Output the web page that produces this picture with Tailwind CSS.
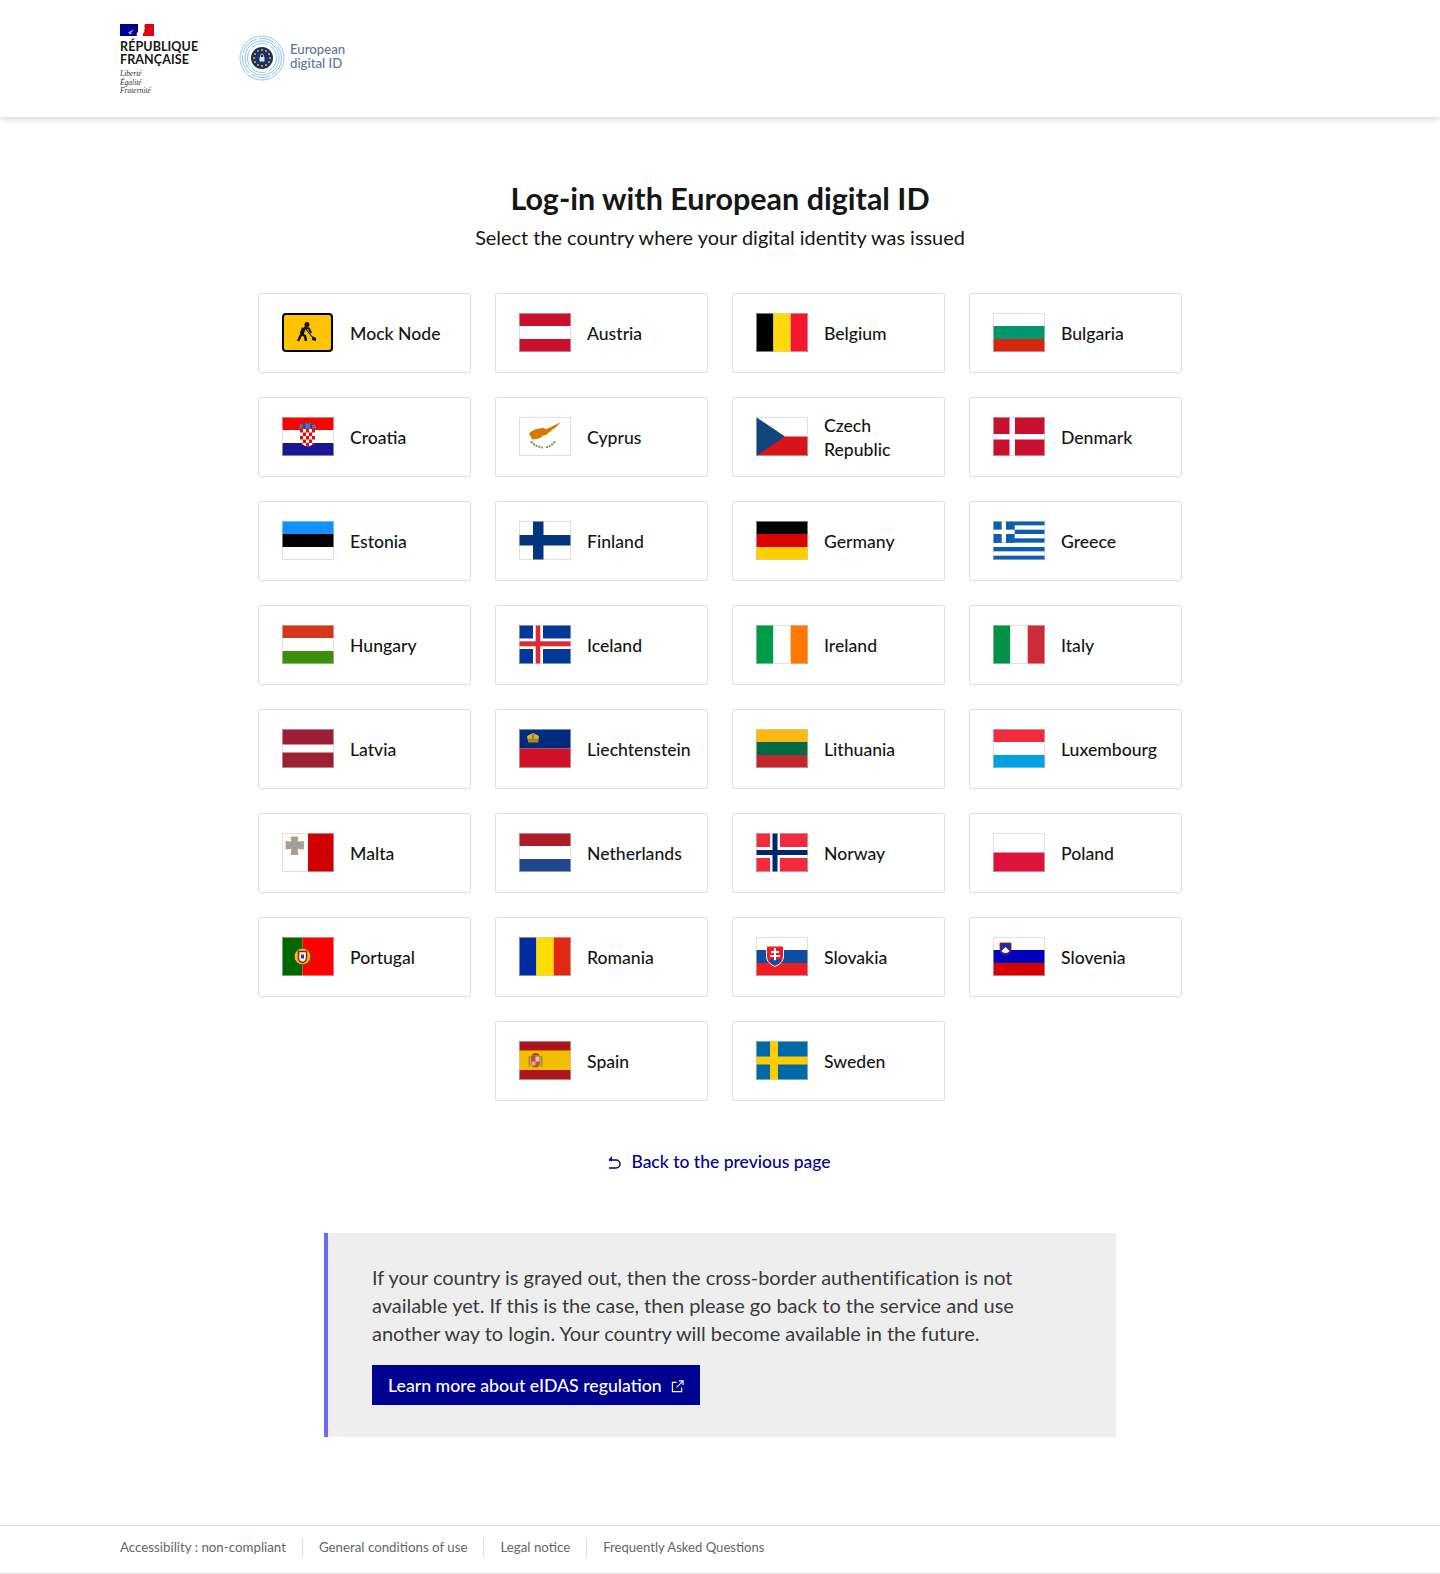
<!DOCTYPE html>
<html lang="en">
<head>
    <meta charset="UTF-8">
    <title>Log-in with European digital ID</title>
    <script src="https://cdn.jsdelivr.net/npm/@tailwindcss/browser@4"></script>
</head>
<body class="bg-white text-[#161616] font-['Lato','Noto_Sans',sans-serif]">

    <!-- header -->
    <header class="h-[117px] bg-white shadow-[0_2px_6px_rgba(0,0,18,0.16)] flex items-start pl-[120px]">
        <div class="pt-[24px] w-[119px]">
            <svg width="34" height="12" viewBox="0 0 34 12" class="block">
                <rect width="18" height="12" fill="#000091"/><rect x="18" width="5" height="12" fill="#fff"/><rect x="23" width="11" height="12" fill="#e1000f"/>
                <path d="M17 12 C16 10 17.500 8 18.500 6.500 C18 4 20 1 23 0 L25 0 C24 2 24.500 3.500 25 5 L24 6 L24.500 8 L23 9.500 L23 12 Z" fill="#fff"/>
                <path d="M8 8.500 L14 5 L11 9 L13 9 L10 10.500 Z" fill="#9a9ad0"/>
            </svg>
            <p class="mt-[4px] font-bold text-[12.5px] leading-[13px] tracking-[0.1px] text-[#161616]">RÉPUBLIQUE<br>FRANÇAISE</p>
            <p class="mt-[4px] font-['Liberation_Serif',serif] italic text-[7.5px] leading-[8.5px] text-[#333]">Liberté<br>Égalité<br>Fraternité</p>
        </div>
        <div class="flex items-center mt-[35px] gap-[5px]">
            <svg width="46" height="46" viewBox="0 0 46 46" fill="none">
                <circle cx="23" cy="23" r="22" stroke="#7db9ec" stroke-width="0.8"/>
                <circle cx="23" cy="23" r="19.5" stroke="#6eb1ea" stroke-width="0.8" stroke-dasharray="20 2"/>
                <circle cx="23" cy="23" r="17" stroke="#6eb1ea" stroke-width="0.8"/>
                <circle cx="23" cy="23" r="14.5" stroke="#6eb1ea" stroke-width="0.8" stroke-dasharray="16 3"/>
                <circle cx="23" cy="23" r="11" fill="#1f2f66"/>
                <g fill="#e8b93a">
                    <circle cx="23" cy="15" r="1"/><circle cx="27" cy="16" r="1"/><circle cx="30" cy="19" r="1"/><circle cx="31" cy="23" r="1"/><circle cx="30" cy="27" r="1"/><circle cx="27" cy="30" r="1"/><circle cx="23" cy="31" r="1"/><circle cx="19" cy="30" r="1"/><circle cx="16" cy="27" r="1"/><circle cx="15" cy="23" r="1"/><circle cx="16" cy="19" r="1"/><circle cx="19" cy="16" r="1"/>
                </g>
                <rect x="20.5" y="22" width="5" height="4.5" rx="0.5" fill="#dfe6f2"/>
                <path d="M21.5 22 V20.5 A1.5 1.5 0 0 1 24.5 20.5 V22" stroke="#dfe6f2" stroke-width="0.8"/>
            </svg>
            <p class="mb-[4px] text-[13.2px] leading-[14px] font-medium text-[#5c7698]">European<br>digital ID</p>
        </div>
    </header>

    <main class="flex flex-col items-center">
        <h1 class="mt-[62px] text-[30.5px] leading-[38px] font-bold">Log-in with European digital ID</h1>
        <p class="mt-[5px] text-[19.9px] leading-[30px]">Select the country where your digital identity was issued</p>

        <div class="mt-[41px] grid grid-cols-[repeat(4,213px)] auto-rows-[80px] gap-[24px] text-[17.6px] leading-[24px] font-medium">

            <a class="flex items-center gap-[16px] pl-[23px] pr-[8px] pb-px border border-[#ddd] rounded-[3px]">
                <svg width="52" height="39" viewBox="0 0 52 39" class="shrink-0"><rect x="1" y="1" width="49" height="37" rx="3" fill="#ffc400" stroke="#000" stroke-width="2"/><circle cx="25" cy="11.500" r="2.500" fill="#111"/><g fill="none" stroke="#111" stroke-linejoin="round"><path d="M22 15 L19.500 21" stroke-width="4"/><path d="M19.500 21 L16 28" stroke-width="2.500"/><path d="M19.500 21 L23 23 L24 28" stroke-width="2.500"/><path d="M22 14.500 L27 15.500 L29 20" stroke-width="2"/><path d="M23 15 L31 25" stroke-width="1.200"/></g><path d="M30 23 L34 25 L34 28 L30 27 Z" fill="#111"/></svg>
                <span class="pt-[3px]">Mock Node</span>
            </a>
            <a class="flex items-center gap-[16px] pl-[23px] pr-[8px] pb-px border border-[#ddd] rounded-[3px]">
                <svg width="52" height="39" viewBox="0 0 52 39" class="shrink-0"><rect width="52" height="39" fill="#fff"/><rect width="52" height="13" fill="#c8102e"/><rect y="26" width="52" height="13" fill="#c8102e"/><rect x=".5" y=".5" width="51" height="38" fill="none" stroke="#ccc" stroke-opacity=".6"/></svg>
                <span class="pt-[3px]">Austria</span>
            </a>
            <a class="flex items-center gap-[16px] pl-[23px] pr-[8px] pb-px border border-[#ddd] rounded-[3px]">
                <svg width="52" height="39" viewBox="0 0 52 39" class="shrink-0"><rect width="17.400" height="39" fill="#000"/><rect x="17.400" width="17.300" height="39" fill="#ffd90c"/><rect x="34.700" width="17.300" height="39" fill="#f31830"/><rect x=".5" y=".5" width="51" height="38" fill="none" stroke="#ccc" stroke-opacity=".6"/></svg>
                <span class="pt-[3px]">Belgium</span>
            </a>
            <a class="flex items-center gap-[16px] pl-[23px] pr-[8px] pb-px border border-[#ddd] rounded-[3px]">
                <svg width="52" height="39" viewBox="0 0 52 39" class="shrink-0"><rect width="52" height="13" fill="#fff"/><rect y="13" width="52" height="13" fill="#00966e"/><rect y="26" width="52" height="13" fill="#d62612"/><rect x=".5" y=".5" width="51" height="38" fill="none" stroke="#ccc" stroke-opacity=".6"/></svg>
                <span class="pt-[3px]">Bulgaria</span>
            </a>

            <a class="flex items-center gap-[16px] pl-[23px] pr-[8px] pb-px border border-[#ddd] rounded-[3px]">
                <svg width="52" height="39" viewBox="0 0 52 39" class="shrink-0"><defs><clipPath id="hr-shield"><path d="M18 12 H33 V23 C33 27 29.500 28.500 25.500 29.500 C21.500 28.500 18 27 18 23 Z"/></clipPath></defs><rect width="52" height="13" fill="#f00"/><rect y="13" width="52" height="13" fill="#fff"/><rect y="26" width="52" height="13" fill="#171796"/><path d="M17 11.500 L18 7 L21 8 L23 5.500 L25.500 7 L28 5.500 L30 8 L33 7 L34.500 11.500 Z" fill="#3f7fb8"/><path d="M20.500 11.500 L21 8 L23 5.500 L23.500 11.500 Z M28 11.500 L28 5.500 L30 8 L30.500 11.500 Z" fill="#2f3f88"/><g clip-path="url(#hr-shield)"><rect x="18" y="12" width="15" height="18" fill="#fff"/><g fill="#f00"><rect x="18" y="12" width="3" height="3.500"/><rect x="24" y="12" width="3" height="3.500"/><rect x="30" y="12" width="3" height="3.500"/><rect x="21" y="15.500" width="3" height="3.500"/><rect x="27" y="15.500" width="3" height="3.500"/><rect x="18" y="19" width="3" height="3.500"/><rect x="24" y="19" width="3" height="3.500"/><rect x="30" y="19" width="3" height="3.500"/><rect x="21" y="22.500" width="3" height="3.500"/><rect x="27" y="22.500" width="3" height="3.500"/><rect x="18" y="26" width="3" height="3.500"/><rect x="24" y="26" width="3" height="3.500"/><rect x="30" y="26" width="3" height="3.500"/></g></g><rect x=".5" y=".5" width="51" height="38" fill="none" stroke="#ccc" stroke-opacity=".6"/></svg>
                <span class="pt-[3px]">Croatia</span>
            </a>
            <a class="flex items-center gap-[16px] pl-[23px] pr-[8px] pb-px border border-[#ddd] rounded-[3px]">
                <svg width="52" height="39" viewBox="0 0 52 39" class="shrink-0"><rect width="52" height="39" fill="#fff"/><path d="M10 17 L12 14.500 L16 12.500 L20 11.500 L24 11 L27 12 L31 10.500 L36 8 L42 5 L37 10 L33 13 L30 15.500 L27 18 L24 18.500 L22 20.500 L18 22 L13 22.500 L12 20 Z" fill="#d57800"/><g fill="none" stroke="#7d8a68" stroke-width="2" stroke-dasharray="2 1"><path d="M12 24.500 C15 28 19 30 24 30.500"/><path d="M36 24.500 C33 28 30 30 26 30.500"/></g><rect x=".5" y=".5" width="51" height="38" fill="none" stroke="#ccc" stroke-opacity=".6"/></svg>
                <span class="pt-[3px]">Cyprus</span>
            </a>
            <a class="flex items-center gap-[16px] pl-[23px] pr-[8px] pb-px border border-[#ddd] rounded-[3px]">
                <svg width="52" height="39" viewBox="0 0 52 39" class="shrink-0"><rect width="52" height="19.500" fill="#fff"/><rect y="19.500" width="52" height="19.500" fill="#d7141a"/><path d="M0 0 L29 19.500 L0 39 Z" fill="#11457e"/><rect x=".5" y=".5" width="51" height="38" fill="none" stroke="#ccc" stroke-opacity=".6"/></svg>
                <span class="pt-[3px]">Czech<br>Republic</span>
            </a>
            <a class="flex items-center gap-[16px] pl-[23px] pr-[8px] pb-px border border-[#ddd] rounded-[3px]">
                <svg width="52" height="39" viewBox="0 0 52 39" class="shrink-0"><rect width="52" height="39" fill="#c8102e"/><rect x="16.500" width="5.500" height="39" fill="#fff"/><rect y="17" width="52" height="5.500" fill="#fff"/><rect x=".5" y=".5" width="51" height="38" fill="none" stroke="#ccc" stroke-opacity=".6"/></svg>
                <span class="pt-[3px]">Denmark</span>
            </a>

            <a class="flex items-center gap-[16px] pl-[23px] pr-[8px] pb-px border border-[#ddd] rounded-[3px]">
                <svg width="52" height="39" viewBox="0 0 52 39" class="shrink-0"><rect width="52" height="13" fill="#1291ff"/><rect y="13" width="52" height="13" fill="#000"/><rect y="26" width="52" height="13" fill="#fff"/><rect x=".5" y=".5" width="51" height="38" fill="none" stroke="#ccc" stroke-opacity=".6"/></svg>
                <span class="pt-[3px]">Estonia</span>
            </a>
            <a class="flex items-center gap-[16px] pl-[23px] pr-[8px] pb-px border border-[#ddd] rounded-[3px]">
                <svg width="52" height="39" viewBox="0 0 52 39" class="shrink-0"><rect width="52" height="39" fill="#fff"/><rect x="14" width="10.500" height="39" fill="#003580"/><rect y="14" width="52" height="10.500" fill="#003580"/><rect x=".5" y=".5" width="51" height="38" fill="none" stroke="#ccc" stroke-opacity=".6"/></svg>
                <span class="pt-[3px]">Finland</span>
            </a>
            <a class="flex items-center gap-[16px] pl-[23px] pr-[8px] pb-px border border-[#ddd] rounded-[3px]">
                <svg width="52" height="39" viewBox="0 0 52 39" class="shrink-0"><rect width="52" height="13" fill="#000"/><rect y="13" width="52" height="13" fill="#dd0000"/><rect y="26" width="52" height="13" fill="#ffce00"/><rect x=".5" y=".5" width="51" height="38" fill="none" stroke="#ccc" stroke-opacity=".6"/></svg>
                <span class="pt-[3px]">Germany</span>
            </a>
            <a class="flex items-center gap-[16px] pl-[23px] pr-[8px] pb-px border border-[#ddd] rounded-[3px]">
                <svg width="52" height="39" viewBox="0 0 52 39" class="shrink-0"><rect width="52" height="39" fill="#fff"/><g fill="#0d5eaf"><rect width="52" height="4.330"/><rect y="8.670" width="52" height="4.330"/><rect y="17.330" width="52" height="4.330"/><rect y="26" width="52" height="4.330"/><rect y="34.670" width="52" height="4.330"/><rect width="21.700" height="21.700"/></g><g fill="#fff"><rect x="8.670" width="4.330" height="21.700"/><rect y="8.670" width="21.700" height="4.330"/></g><rect x=".5" y=".5" width="51" height="38" fill="none" stroke="#ccc" stroke-opacity=".6"/></svg>
                <span class="pt-[3px]">Greece</span>
            </a>

            <a class="flex items-center gap-[16px] pl-[23px] pr-[8px] pb-px border border-[#ddd] rounded-[3px]">
                <svg width="52" height="39" viewBox="0 0 52 39" class="shrink-0"><rect width="52" height="13" fill="#d6361a"/><rect y="13" width="52" height="13" fill="#fff"/><rect y="26" width="52" height="13" fill="#3d8e0a"/><rect x=".5" y=".5" width="51" height="38" fill="none" stroke="#ccc" stroke-opacity=".6"/></svg>
                <span class="pt-[3px]">Hungary</span>
            </a>
            <a class="flex items-center gap-[16px] pl-[23px] pr-[8px] pb-px border border-[#ddd] rounded-[3px]">
                <svg width="52" height="39" viewBox="0 0 52 39" class="shrink-0"><rect width="52" height="39" fill="#003897"/><rect x="14" width="10" height="39" fill="#fff"/><rect y="13.500" width="52" height="10.500" fill="#fff"/><rect x="16.700" width="4.600" height="39" fill="#dc2c35"/><rect y="16.300" width="52" height="5" fill="#dc2c35"/><rect x=".5" y=".5" width="51" height="38" fill="none" stroke="#ccc" stroke-opacity=".6"/></svg>
                <span class="pt-[3px]">Iceland</span>
            </a>
            <a class="flex items-center gap-[16px] pl-[23px] pr-[8px] pb-px border border-[#ddd] rounded-[3px]">
                <svg width="52" height="39" viewBox="0 0 52 39" class="shrink-0"><rect width="17.400" height="39" fill="#009b48"/><rect x="17.400" width="17.300" height="39" fill="#fff"/><rect x="34.700" width="17.300" height="39" fill="#ff7900"/><rect x=".5" y=".5" width="51" height="38" fill="none" stroke="#ccc" stroke-opacity=".6"/></svg>
                <span class="pt-[3px]">Ireland</span>
            </a>
            <a class="flex items-center gap-[16px] pl-[23px] pr-[8px] pb-px border border-[#ddd] rounded-[3px]">
                <svg width="52" height="39" viewBox="0 0 52 39" class="shrink-0"><rect width="17.400" height="39" fill="#009246"/><rect x="17.400" width="17.300" height="39" fill="#fff"/><rect x="34.700" width="17.300" height="39" fill="#ce2b37"/><rect x=".5" y=".5" width="51" height="38" fill="none" stroke="#ccc" stroke-opacity=".6"/></svg>
                <span class="pt-[3px]">Italy</span>
            </a>

            <a class="flex items-center gap-[16px] pl-[23px] pr-[8px] pb-px border border-[#ddd] rounded-[3px]">
                <svg width="52" height="39" viewBox="0 0 52 39" class="shrink-0"><rect width="52" height="39" fill="#9b2035"/><rect y="15.500" width="52" height="8" fill="#fff"/><rect x=".5" y=".5" width="51" height="38" fill="none" stroke="#ccc" stroke-opacity=".6"/></svg>
                <span class="pt-[3px]">Latvia</span>
            </a>
            <a class="flex items-center gap-[16px] pl-[23px] pr-[8px] pb-px border border-[#ddd] rounded-[3px]">
                <svg width="52" height="39" viewBox="0 0 52 39" class="shrink-0"><rect width="52" height="19.500" fill="#002b7f"/><rect y="19.500" width="52" height="19.500" fill="#ce1126"/><path d="M8.500 10.500 L8 7.500 C9 6 11 5.500 14 4 C17 5.500 19 6 20 7.500 L19.500 10.500 Z" fill="#d9b030"/><rect x="9" y="10.500" width="10.500" height="3" fill="#a88a24"/><rect x="13.500" y="5" width="1" height="5" fill="#5c4a10"/><rect x=".5" y=".5" width="51" height="38" fill="none" stroke="#ccc" stroke-opacity=".6"/></svg>
                <span class="pt-[3px]">Liechtenstein</span>
            </a>
            <a class="flex items-center gap-[16px] pl-[23px] pr-[8px] pb-px border border-[#ddd] rounded-[3px]">
                <svg width="52" height="39" viewBox="0 0 52 39" class="shrink-0"><rect width="52" height="13" fill="#fdb913"/><rect y="13" width="52" height="13" fill="#006a44"/><rect y="26" width="52" height="13" fill="#c1272d"/><rect x=".5" y=".5" width="51" height="38" fill="none" stroke="#ccc" stroke-opacity=".6"/></svg>
                <span class="pt-[3px]">Lithuania</span>
            </a>
            <a class="flex items-center gap-[16px] pl-[23px] pr-[8px] pb-px border border-[#ddd] rounded-[3px]">
                <svg width="52" height="39" viewBox="0 0 52 39" class="shrink-0"><rect width="52" height="13" fill="#ef2b3d"/><rect y="13" width="52" height="13" fill="#fff"/><rect y="26" width="52" height="13" fill="#00a2e1"/><rect x=".5" y=".5" width="51" height="38" fill="none" stroke="#ccc" stroke-opacity=".6"/></svg>
                <span class="pt-[3px]">Luxembourg</span>
            </a>

            <a class="flex items-center gap-[16px] pl-[23px] pr-[8px] pb-px border border-[#ddd] rounded-[3px]">
                <svg width="52" height="39" viewBox="0 0 52 39" class="shrink-0"><rect width="26" height="39" fill="#fff"/><rect x="26" width="26" height="39" fill="#cf0000"/><path d="M9 4 H16 L15 9 L21.500 8.500 V16 L15 15.500 L16 21.500 H9 L10 15.500 L4 16 V8.500 L10 9 Z" fill="#a0a0a0" stroke="#d08a40" stroke-width=".7"/><rect x=".5" y=".5" width="51" height="38" fill="none" stroke="#ccc" stroke-opacity=".6"/></svg>
                <span class="pt-[3px]">Malta</span>
            </a>
            <a class="flex items-center gap-[16px] pl-[23px] pr-[8px] pb-px border border-[#ddd] rounded-[3px]">
                <svg width="52" height="39" viewBox="0 0 52 39" class="shrink-0"><rect width="52" height="13" fill="#ae1c28"/><rect y="13" width="52" height="13" fill="#fff"/><rect y="26" width="52" height="13" fill="#21468b"/><rect x=".5" y=".5" width="51" height="38" fill="none" stroke="#ccc" stroke-opacity=".6"/></svg>
                <span class="pt-[3px]">Netherlands</span>
            </a>
            <a class="flex items-center gap-[16px] pl-[23px] pr-[8px] pb-px border border-[#ddd] rounded-[3px]">
                <svg width="52" height="39" viewBox="0 0 52 39" class="shrink-0"><rect width="52" height="39" fill="#ef2b3d"/><rect x="14" width="10" height="39" fill="#fff"/><rect y="14" width="52" height="11" fill="#fff"/><rect x="16.500" width="5" height="39" fill="#002868"/><rect y="17" width="52" height="5" fill="#002868"/><rect x=".5" y=".5" width="51" height="38" fill="none" stroke="#ccc" stroke-opacity=".6"/></svg>
                <span class="pt-[3px]">Norway</span>
            </a>
            <a class="flex items-center gap-[16px] pl-[23px] pr-[8px] pb-px border border-[#ddd] rounded-[3px]">
                <svg width="52" height="39" viewBox="0 0 52 39" class="shrink-0"><rect width="52" height="19.500" fill="#fff"/><rect y="19.500" width="52" height="19.500" fill="#dc143c"/><rect x=".5" y=".5" width="51" height="38" fill="none" stroke="#ccc" stroke-opacity=".6"/></svg>
                <span class="pt-[3px]">Poland</span>
            </a>

            <a class="flex items-center gap-[16px] pl-[23px] pr-[8px] pb-px border border-[#ddd] rounded-[3px]">
                <svg width="52" height="39" viewBox="0 0 52 39" class="shrink-0"><rect width="20.500" height="39" fill="#006600"/><rect x="20.500" width="31.500" height="39" fill="#f00"/><circle cx="20.500" cy="19.500" r="8.300" fill="#d8c820" stroke="#406020" stroke-width="1"/><path d="M16.500 14.500 H24.500 V21 C24.500 24 22.500 25 20.500 25.500 C18.500 25 16.500 24 16.500 21 Z" fill="#fff" stroke="#d00" stroke-width="1.500"/><rect x="19" y="17.500" width="3" height="4" fill="#2040a0"/><rect x=".5" y=".5" width="51" height="38" fill="none" stroke="#ccc" stroke-opacity=".6"/></svg>
                <span class="pt-[3px]">Portugal</span>
            </a>
            <a class="flex items-center gap-[16px] pl-[23px] pr-[8px] pb-px border border-[#ddd] rounded-[3px]">
                <svg width="52" height="39" viewBox="0 0 52 39" class="shrink-0"><rect width="17.400" height="39" fill="#002b9f"/><rect x="17.400" width="17.300" height="39" fill="#ffdd00"/><rect x="34.700" width="17.300" height="39" fill="#e02814"/><rect x=".5" y=".5" width="51" height="38" fill="none" stroke="#ccc" stroke-opacity=".6"/></svg>
                <span class="pt-[3px]">Romania</span>
            </a>
            <a class="flex items-center gap-[16px] pl-[23px] pr-[8px] pb-px border border-[#ddd] rounded-[3px]">
                <svg width="52" height="39" viewBox="0 0 52 39" class="shrink-0"><rect width="52" height="13" fill="#fff"/><rect y="13" width="52" height="13" fill="#0b4ea2"/><rect y="26" width="52" height="13" fill="#ee1c25"/><path d="M10.500 9 H27.500 V19 C27.500 25 23 27.500 19 29.500 C15 27.500 10.500 25 10.500 19 Z" fill="#ee1c25" stroke="#fff" stroke-width="1"/><path d="M18 11 H20 V14 H23 V16 H20 V18 H24 V20 H20 V24 H18 V20 H14 V18 H18 V16 H15 V14 H18 Z" fill="#fff"/><path d="M12.500 24 C14 21.500 16 22 19 23.500 C22 22 24 21.500 25.500 24 C23.500 26.500 21 27.500 19 28.500 C17 27.500 14.500 26.500 12.500 24 Z" fill="#0b4ea2"/><rect x=".5" y=".5" width="51" height="38" fill="none" stroke="#ccc" stroke-opacity=".6"/></svg>
                <span class="pt-[3px]">Slovakia</span>
            </a>
            <a class="flex items-center gap-[16px] pl-[23px] pr-[8px] pb-px border border-[#ddd] rounded-[3px]">
                <svg width="52" height="39" viewBox="0 0 52 39" class="shrink-0"><rect width="52" height="13" fill="#fff"/><rect y="13" width="52" height="13" fill="#0000bf"/><rect y="26" width="52" height="13" fill="#d50000"/><path d="M7 6 H18 V13 C18 15.500 15.500 17 12.500 18 C9.500 17 7 15.500 7 13 Z" fill="#1b2bb0" stroke="#d50000" stroke-width=".8"/><path d="M8.500 14 L10.500 12 L12.500 10 L14.500 12 L16.500 14 C15 16.500 10 16.500 8.500 14 Z" fill="#fff"/><rect x=".5" y=".5" width="51" height="38" fill="none" stroke="#ccc" stroke-opacity=".6"/></svg>
                <span class="pt-[3px]">Slovenia</span>
            </a>

            <a class="col-start-2 flex items-center gap-[16px] pl-[23px] pr-[8px] pb-px border border-[#ddd] rounded-[3px]">
                <svg width="52" height="39" viewBox="0 0 52 39" class="shrink-0"><rect width="52" height="39" fill="#aa151b"/><rect y="9.500" width="52" height="19.500" fill="#f1bf00"/><rect x="9.500" y="15" width="2" height="10.500" fill="#a88a50"/><rect x="21.500" y="15" width="2" height="10.500" fill="#a88a50"/><path d="M12 15 H21 V22.500 C21 25 19 26.500 16.500 26.500 C14 26.500 12 25 12 22.500 Z" fill="#c4503a"/><rect x="16.500" y="15.500" width="4" height="5" fill="#dcc8c8"/><rect x="12.500" y="20.500" width="4" height="4" fill="#d8b060"/><path d="M12.500 14.500 C13 11.500 20 11.500 20.500 14.500 Z" fill="#a03020"/><rect x=".5" y=".5" width="51" height="38" fill="none" stroke="#ccc" stroke-opacity=".6"/></svg>
                <span class="pt-[3px]">Spain</span>
            </a>
            <a class="flex items-center gap-[16px] pl-[23px] pr-[8px] pb-px border border-[#ddd] rounded-[3px]">
                <svg width="52" height="39" viewBox="0 0 52 39" class="shrink-0"><rect width="52" height="39" fill="#006aa7"/><rect x="14" width="8" height="39" fill="#fecc00"/><rect y="15.500" width="52" height="8" fill="#fecc00"/><rect x=".5" y=".5" width="51" height="38" fill="none" stroke="#ccc" stroke-opacity=".6"/></svg>
                <span class="pt-[3px]">Sweden</span>
            </a>
        </div>

        <a class="mt-[47px] mr-[3px] flex items-center gap-[9px] text-[17.5px] leading-[28px] font-medium text-[#000091]">
            <svg width="16" height="16" viewBox="0 0 16 16" fill="none" stroke="#000091" stroke-width="1.500"><path d="M3 6 H10 A4 4 0 0 1 10 14 H3"/><path d="M6 2 L2.500 6 L6 7.500" fill="#000091" stroke="none"/></svg>
            <span>Back to the previous page</span>
        </a>

        <!-- info box -->
        <section class="mt-[57px] w-[792px] h-[204px] bg-[#eeeeee] border-l-[4px] border-[#6a6af4] pl-[44px] pr-[48px] pt-[30px]">
            <p class="text-[20px] leading-[28px] tracking-[-0.02px] text-[#3a3a3a]">If your country is grayed out, then the cross-border authentification is not available yet. If this is the case, then please go back to the service and use another way to login. Your country will become available in the future.</p>
            <a class="mt-[18px] inline-flex items-center h-[40px] pl-[16px] pr-[16px] pt-[2px] gap-[9px] bg-[#000091] text-white text-[17.7px] font-medium">
                Learn more about eIDAS regulation
                <svg width="13" height="13" viewBox="0 0 14 14" fill="none" stroke="#fff" stroke-width="1.200"><path d="M6 2.500 H1.500 V12.500 H11.500 V8"/><path d="M6 8 L12.500 1.500 M8.500 1 H13 V5.500"/></svg>
            </a>
        </section>
    </main>

    <footer class="mt-[88px] h-[49px] border-t border-b border-[#ddd] flex items-center pl-[120px] pb-[4px] text-[13.3px] text-[#666]">
        <a class="pr-[16px] border-r border-[#ddd]">Accessibility : non-compliant</a>
        <a class="px-[16px] border-r border-[#ddd]">General conditions of use</a>
        <a class="px-[16px] border-r border-[#ddd]">Legal notice</a>
        <a class="px-[16px] text-[13.1px]">Frequently Asked Questions</a>
    </footer>
</body>
</html>
